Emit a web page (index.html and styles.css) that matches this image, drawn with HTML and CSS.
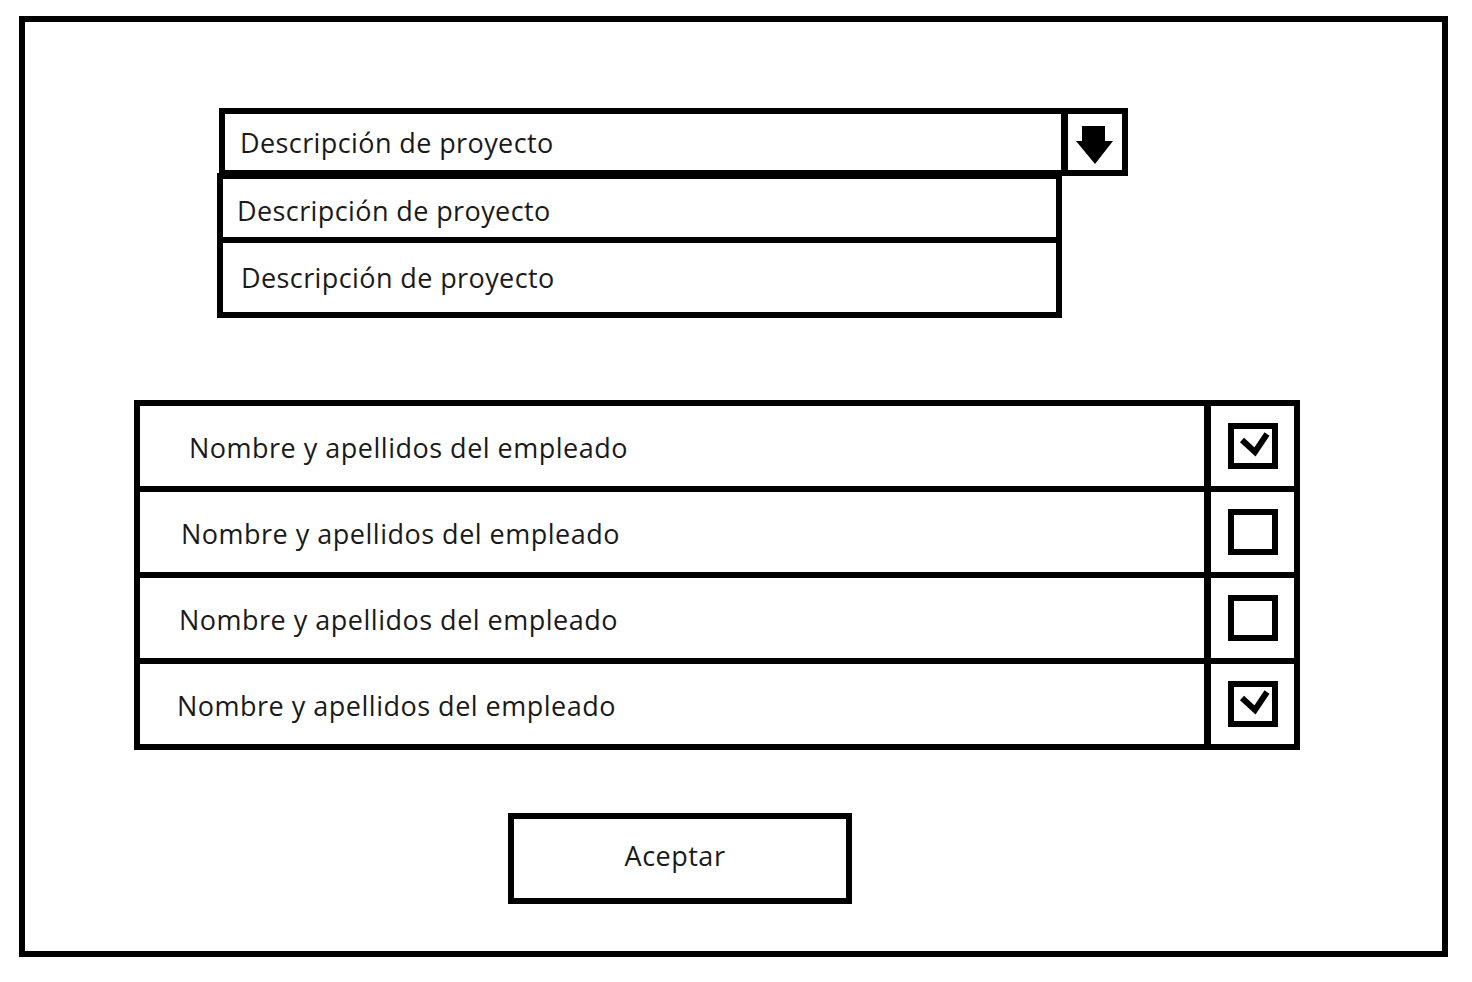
FILE: index.html
```html
<!DOCTYPE html>
<html lang="es">

<head>
    <meta charset="UTF-8">
    <meta name="viewport" content="width=device-width, initial-scale=1.0">
    <title>Asignar empleados a proyecto</title>
    <link rel="stylesheet" href="styles.css">
</head>

<body>
    <div class="frame">

        <!-- Project selector -->
        <div class="project-select">
            <div class="select-box">
                <div class="select-value">Descripción de proyecto</div>
                <div class="select-arrow">
                    <svg width="38" height="38" viewBox="0 0 38 38">
                        <path d="M6 0 H29 V15 H37 L19 38 L0 15 H6 Z" fill="#000" />
                    </svg>
                </div>
            </div>
            <ul class="select-options">
                <li class="option option-short">Descripción de proyecto</li>
                <li class="option option-tall">Descripción de proyecto</li>
            </ul>
        </div>

        <!-- Employee list -->
        <div class="employee-table">
            <div class="employee-row">
                <div class="employee-name indent-lg">Nombre y apellidos del empleado</div>
                <div class="employee-check">
                    <div class="checkbox checked">
                        <svg width="38" height="34" viewBox="0 0 38 34">
                            <path d="M8 11 L21 23 L33 5" fill="none" stroke="#000" stroke-width="6" />
                        </svg>
                    </div>
                </div>
            </div>
            <div class="employee-row">
                <div class="employee-name indent-md">Nombre y apellidos del empleado</div>
                <div class="employee-check">
                    <div class="checkbox"></div>
                </div>
            </div>
            <div class="employee-row">
                <div class="employee-name">Nombre y apellidos del empleado</div>
                <div class="employee-check">
                    <div class="checkbox"></div>
                </div>
            </div>
            <div class="employee-row">
                <div class="employee-name indent-sm">Nombre y apellidos del empleado</div>
                <div class="employee-check">
                    <div class="checkbox checked">
                        <svg width="38" height="34" viewBox="0 0 38 34">
                            <path d="M8 11 L21 23 L33 5" fill="none" stroke="#000" stroke-width="6" />
                        </svg>
                    </div>
                </div>
            </div>
        </div>

        <button class="accept-btn">Aceptar</button>
    </div>
</body>

</html>
```

FILE: styles.css
```css
* {
    margin: 0;
    padding: 0;
    box-sizing: border-box;
    font-family: 'Open Sans', 'Liberation Sans', sans-serif;
}

body {
    background-color: #fff;
    color: #1a1a1a;
}

/* Outer window frame */
.frame {
    width: 1429px;
    height: 941px;
    margin: 16px 0 0 19px;
    border: 6px solid #000;
    display: flex;
    flex-direction: column;
    align-items: flex-start;
}

/* Project selector */
.project-select {
    margin: 86px 0 0 194px;
}

.select-box {
    display: flex;
    width: 909px;
    height: 68px;
    border: 6px solid #000;
}

.select-value {
    flex: 1;
    display: flex;
    align-items: center;
    padding-left: 15px;
    border-right: 7px solid #000;
    font-size: 27px;
    letter-spacing: 0.4px;
}

.select-arrow {
    width: 54px;
    display: flex;
    align-items: center;
    justify-content: center;
    padding-top: 6px;
}

.select-options {
    list-style: none;
    width: 845px;
    margin: -3px 0 0 -2px;
    border: 6px solid #000;
}

.option {
    display: flex;
    align-items: center;
    font-size: 27px;
    letter-spacing: 0.4px;
}

.option-short {
    height: 64px;
    padding-left: 14px;
    padding-top: 4px;
    border-bottom: 6px solid #000;
}

.option-tall {
    height: 69px;
    padding-left: 18px;
}

/* Employee list */
.employee-table {
    width: 1166px;
    margin: 82px 0 0 109px;
    border: 6px solid #000;
}

.employee-row {
    display: flex;
    height: 86px;
    border-bottom: 6px solid #000;
}

.employee-row:last-child {
    height: 80px;
    border-bottom: none;
}

.employee-name {
    flex: 1;
    display: flex;
    align-items: center;
    padding-left: 39px;
    padding-top: 2px;
    border-right: 7px solid #000;
    font-size: 27px;
    letter-spacing: 0.5px;
}

.indent-lg {
    padding-left: 49px;
}

.indent-md {
    padding-left: 41px;
}

.indent-sm {
    padding-left: 37px;
}

.employee-check {
    width: 83px;
    display: flex;
    align-items: center;
    justify-content: center;
}

.checkbox {
    width: 50px;
    height: 46px;
    border: 6px solid #000;
    display: flex;
    align-items: center;
    justify-content: center;
}

/* Accept button */
.accept-btn {
    width: 344px;
    height: 91px;
    margin: 63px 0 0 483px;
    border: 6px solid #000;
    background-color: #fff;
    color: #1a1a1a;
    font-size: 27px;
    letter-spacing: 0.5px;
    padding-right: 10px;
    padding-bottom: 6px;
}
```
